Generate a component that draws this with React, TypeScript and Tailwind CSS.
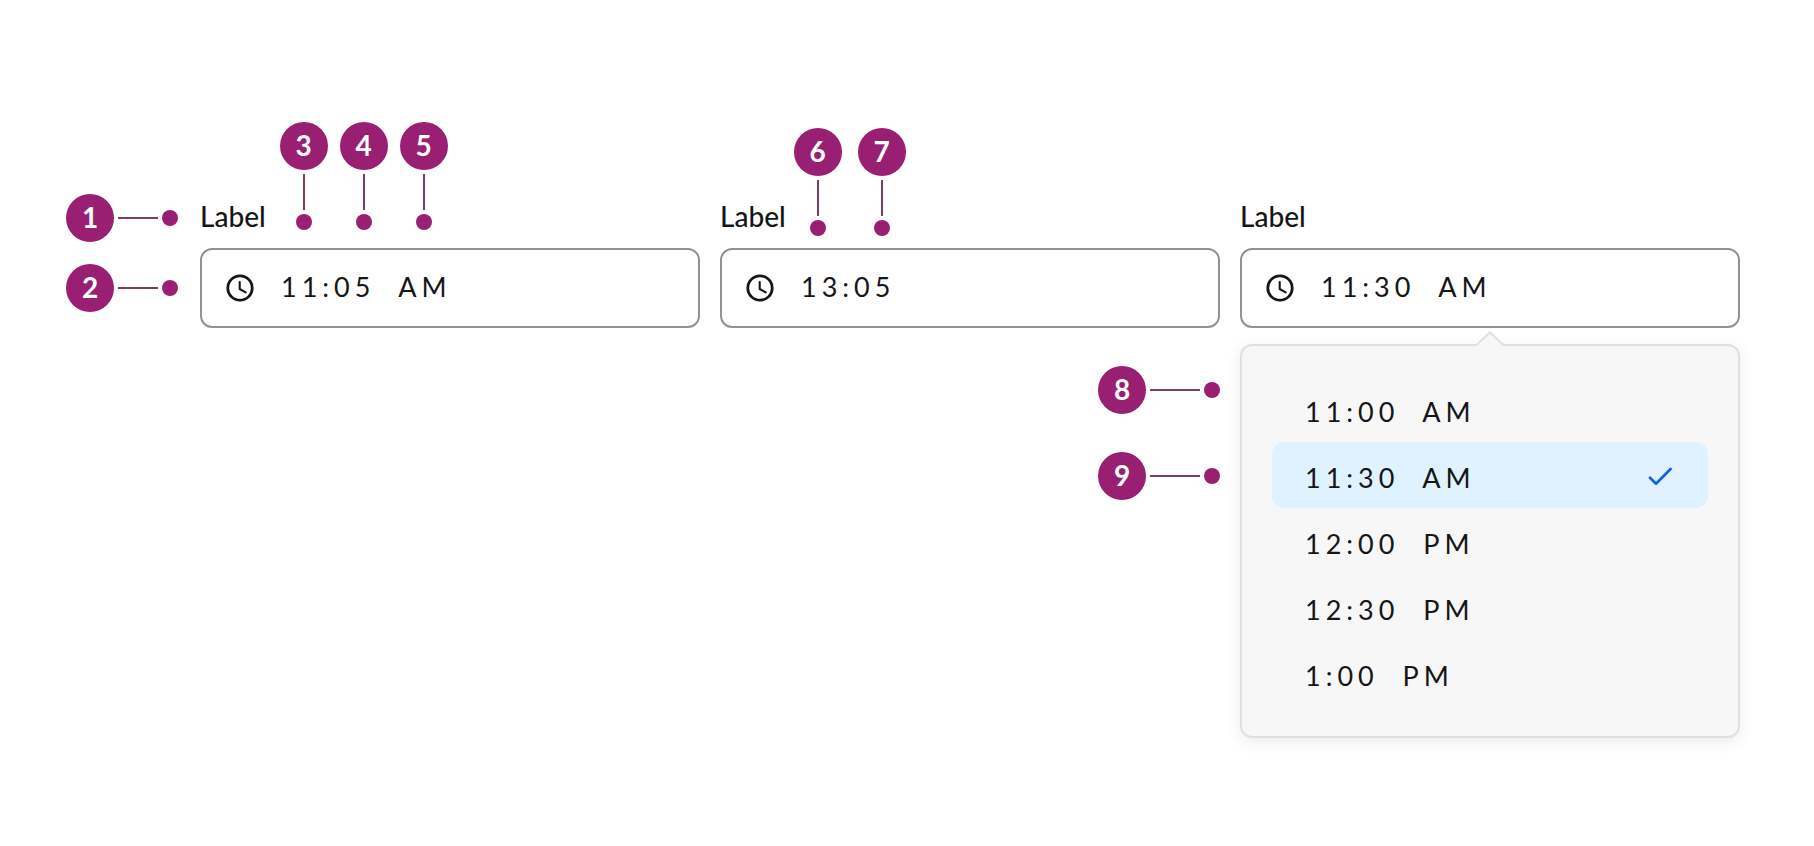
import { useState } from "react";
import clsx from "clsx";

type Direction = "right" | "down";

function Callout({ value, direction, long = false }: { value: number; direction: Direction; long?: boolean }) {
  const down = direction === "down";
  return (
    <div className={clsx("flex w-fit items-center gap-1", down ? "flex-col" : "flex-row")}>
      <span className="flex size-12 items-center justify-center rounded-full bg-[#981f71] pb-0.5 text-[28px] leading-8 font-bold text-white">
        {value}
      </span>
      <span className={clsx("bg-[#7d3c62]", down ? "h-9 w-0.5" : long ? "h-0.5 w-[50px]" : "h-0.5 w-10")} />
      <span className="size-4 rounded-full bg-[#981f71]" />
    </div>
  );
}

function ClockIcon() {
  return (
    <svg viewBox="0 0 32 32" className="size-8 shrink-0" fill="none" stroke="#151618" aria-hidden="true">
      <circle cx="16" cy="16" r="12.2" strokeWidth="2.8" />
      <path d="M15.7 10v7l6 3.3" strokeWidth="2.1" strokeLinecap="round" strokeLinejoin="round" />
    </svg>
  );
}

function CheckIcon() {
  return (
    <svg viewBox="0 0 32 32" className="size-8 shrink-0" fill="none" stroke="#0b64e8" aria-hidden="true">
      <path d="M6 18.7l6 6L26.600 10" strokeWidth="2.7" strokeLinecap="round" strokeLinejoin="round" />
    </svg>
  );
}

function FieldLabel({ id }: { id: string }) {
  return (
    <label htmlFor={id} className="pb-3.5 text-[28px] leading-9 font-medium">
      Label
    </label>
  );
}

function TimeField({ id, value, onChange }: { id: string; value: string; onChange: (value: string) => void }) {
  return (
    <div className="flex h-20 items-center gap-[25px] rounded-xl border-2 border-[#919293] bg-white px-[22px]">
      <ClockIcon />
      <input
        id={id}
        type="text"
        value={value}
        onChange={(event) => onChange(event.target.value)}
        className="h-10 min-w-0 flex-1 bg-transparent pb-0.5 text-[27px] tracking-[5px] outline-none"
      />
    </div>
  );
}

const options = ["11:00  AM", "11:30  AM", "12:00  PM", "12:30  PM", "1:00  PM"];

export default function App() {
  const [first, setFirst] = useState("11:05  AM");
  const [second, setSecond] = useState("13:05");
  const [third, setThird] = useState("11:30  AM");

  return (
    <main className="min-h-screen bg-white pt-[122px] pr-[74px] pb-16 pl-[66px] font-['Lato',sans-serif] text-[#151618]">
      <div className="grid grid-cols-[114px_1fr_1fr_1fr] gap-x-5">
        <div className="flex items-end pb-1.5">
          <Callout value={1} direction="right" />
        </div>
        <div className="flex h-[126px] items-end">
          <FieldLabel id="time-12" />
          <div className="flex gap-3 pb-[18px] pl-3.5">
            <Callout value={3} direction="down" />
            <Callout value={4} direction="down" />
            <Callout value={5} direction="down" />
          </div>
        </div>
        <div className="flex items-end">
          <FieldLabel id="time-24" />
          <div className="flex gap-4 pb-3 pl-2">
            <Callout value={6} direction="down" />
            <Callout value={7} direction="down" />
          </div>
        </div>
        <div className="flex items-end">
          <FieldLabel id="time-menu" />
        </div>

        <div className="flex items-center">
          <Callout value={2} direction="right" />
        </div>
        <TimeField id="time-12" value={first} onChange={setFirst} />
        <TimeField id="time-24" value={second} onChange={setSecond} />
        <TimeField id="time-menu" value={third} onChange={setThird} />

        <div className="col-start-3 flex flex-col items-end gap-[38px] pt-[38px]">
          <Callout value={8} direction="right" long />
          <Callout value={9} direction="right" long />
        </div>
        <div className="relative mt-4 rounded-xl border-2 border-[#dfe0e0] bg-[#f7f7f7] p-[30px] shadow-[0_4px_16px_rgba(0,0,0,0.08)]">
          <svg
            viewBox="0 0 32 18"
            className="absolute -top-4 left-1/2 h-[18px] w-8 -translate-x-1/2"
            fill="none"
            aria-hidden="true"
          >
            <path d="M2 18v-1.5L16 2.6 30 16.500V18z" fill="#f7f7f7" />
            <path d="M1 15h1.500L16 2.200 29.500 15H31" stroke="#dfe0e0" strokeWidth="2" strokeLinejoin="round" />
          </svg>
          <ul role="listbox" aria-label="Time">
            {options.map((option) => (
              <li key={option}>
                <button
                  type="button"
                  role="option"
                  aria-selected={option === third}
                  onClick={() => setThird(option)}
                  className={clsx(
                    "flex h-[66px] w-full items-center justify-between rounded-xl pr-8 pl-[33px] text-[27px] leading-9 tracking-[5px]",
                    option === third && "bg-[#e0f2ff]",
                  )}
                >
                  <span className="pt-1.5 whitespace-pre">{option}</span>
                  {option === third && <CheckIcon />}
                </button>
              </li>
            ))}
          </ul>
        </div>
      </div>
    </main>
  );
}
